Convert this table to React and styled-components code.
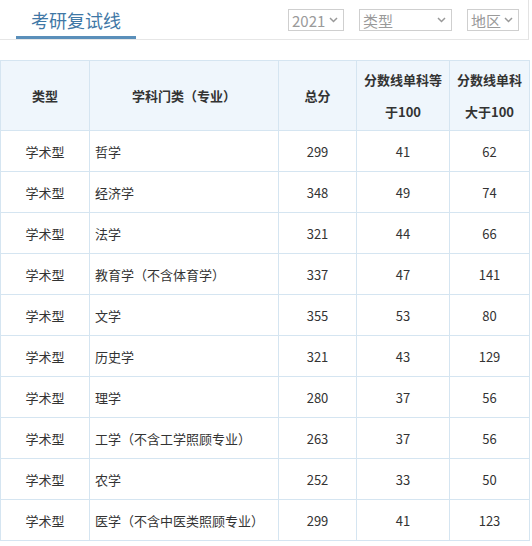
import React from "react";
import styled, { createGlobalStyle } from "styled-components";

const Global = createGlobalStyle`
  html, body { margin: 0; padding: 0; background: #fff; }
  body { font-family: "Microsoft YaHei", "Noto Sans CJK SC", "Noto Sans", sans-serif; }
`;

const Page = styled.div`
  width: 529px;
`;

const TopBar = styled.div`
  height: 39px;
  border-right: 1px solid #e3e3e3;
  border-bottom: 1px solid #e6e6e6;
  box-sizing: content-box;
  display: flex;
  align-items: flex-start;
  justify-content: space-between;
`;

const Tab = styled.div`
  margin-left: 16px;
  width: 120px;
  height: 39px;
  box-sizing: border-box;
  border-bottom: 3px solid #5a8fba;
  display: flex;
  align-items: center;
  justify-content: center;
  padding-top: 3px;
  font-size: 18px;
  color: #3f78a6;
`;

const Selects = styled.div`
  display: flex;
  gap: 15px;
  margin-top: 9px;
  margin-right: 9px;
`;

const Select = styled.div`
  width: ${(p) => p.w}px;
  height: 22px;
  box-sizing: border-box;
  border: 1px solid #cfcfcf;
  display: flex;
  align-items: center;
  justify-content: space-between;
  padding: 0 5px 0 3px;
  font-size: 15px;
  color: #9a9a9a;
`;

const Chevron = () => (
  <svg width="9" height="6" viewBox="0 0 9 6">
    <path d="M1 1 L4.5 4.5 L8 1" fill="none" stroke="#999" strokeWidth="1.5" />
  </svg>
);

const Table = styled.table`
  margin-top: 20px;
  width: 529px;
  border-collapse: collapse;
  table-layout: fixed;
  font-size: 13px;
  color: #333;
`;

const Th = styled.th`
  background: #eff6fc;
  border: 1px solid #d5e5f1;
  height: 69px;
  padding: 0;
  font-weight: bold;
  font-size: 13px;
  color: #333;
  line-height: 32px;
  text-align: center;
`;

const Td = styled.td`
  border: 1px solid #d5e5f1;
  height: 40px;
  padding: 0 ${(p) => (p.left ? "5px" : "0")};
  text-align: ${(p) => (p.left ? "left" : "center")};
  color: #333;
`;

const rows = [
  ["学术型", "哲学", "299", "41", "62"],
  ["学术型", "经济学", "348", "49", "74"],
  ["学术型", "法学", "321", "44", "66"],
  ["学术型", "教育学（不含体育学）", "337", "47", "141"],
  ["学术型", "文学", "355", "53", "80"],
  ["学术型", "历史学", "321", "43", "129"],
  ["学术型", "理学", "280", "37", "56"],
  ["学术型", "工学（不含工学照顾专业）", "263", "37", "56"],
  ["学术型", "农学", "252", "33", "50"],
  ["学术型", "医学（不含中医类照顾专业）", "299", "41", "123"],
];

export default function App() {
  return (
    <Page>
      <Global />
      <TopBar>
        <Tab>考研复试线</Tab>
        <Selects>
          <Select w={56}>2021<Chevron /></Select>
          <Select w={93}>类型<Chevron /></Select>
          <Select w={52}>地区<Chevron /></Select>
        </Selects>
      </TopBar>
      <Table>
        <colgroup>
          <col style={{ width: 89 }} />
          <col style={{ width: 189 }} />
          <col style={{ width: 78 }} />
          <col style={{ width: 93 }} />
          <col style={{ width: 80 }} />
        </colgroup>
        <thead>
          <tr>
            <Th>类型</Th>
            <Th>学科门类（专业）</Th>
            <Th>总分</Th>
            <Th>分数线单科等<br />于100</Th>
            <Th>分数线单科<br />大于100</Th>
          </tr>
        </thead>
        <tbody>
          {rows.map((r, i) => (
            <tr key={i}>
              <Td>{r[0]}</Td>
              <Td left>{r[1]}</Td>
              <Td>{r[2]}</Td>
              <Td>{r[3]}</Td>
              <Td>{r[4]}</Td>
            </tr>
          ))}
        </tbody>
      </Table>
    </Page>
  );
}
